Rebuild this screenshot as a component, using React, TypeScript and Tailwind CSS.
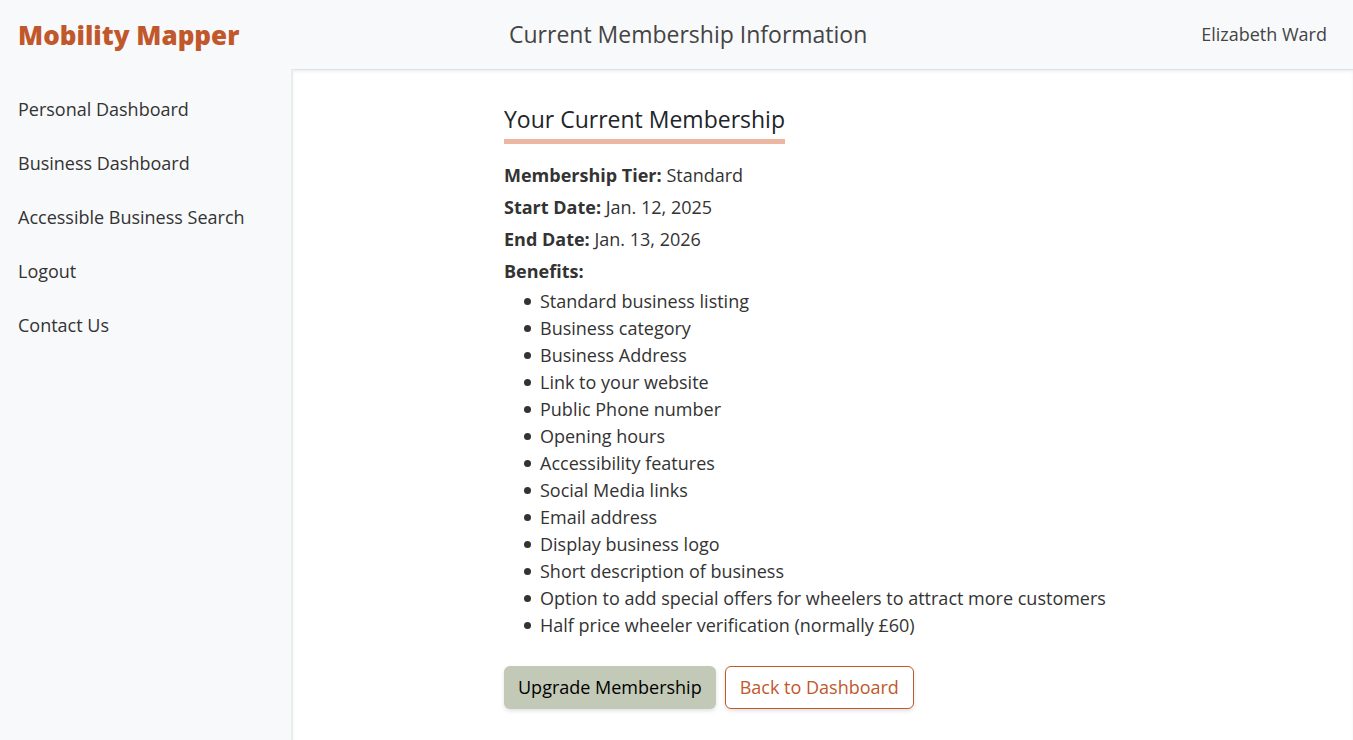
const links = [
  'Personal Dashboard',
  'Business Dashboard',
  'Accessible Business Search',
  'Logout',
  'Contact Us',
];

const details = [
  { label: 'Membership Tier:', value: 'Standard' },
  { label: 'Start Date:', value: 'Jan. 12, 2025' },
  { label: 'End Date:', value: 'Jan. 13, 2026' },
  { label: 'Benefits:', value: '' },
];

const benefits = [
  'Standard business listing',
  'Business category',
  'Business Address',
  'Link to your website',
  'Public Phone number',
  'Opening hours',
  'Accessibility features',
  'Social Media links',
  'Email address',
  'Display business logo',
  'Short description of business',
  'Option to add special offers for wheelers to attract more customers',
  'Half price wheeler verification (normally £60)',
];

function Header() {
  return (
    <header className="flex h-[69px] items-center justify-between bg-[#f8f9fb]">
      <a href="#" className="w-[291px] shrink-0 pl-[18px] text-[26px] leading-10 font-extrabold text-[#c1582c]">
        Mobility Mapper
      </a>
      <h1 className="flex-1 pb-0.5 pl-[218px] text-[23px] leading-8 text-[#444444]">Current Membership Information</h1>
      <span className="pr-[26px] text-[#444444]">Elizabeth Ward</span>
    </header>
  );
}

function Sidebar() {
  return (
    <nav className="w-[293px] shrink-0 border-r-2 border-[#ebecee] bg-[#f8f9fb] pt-[27px] pl-[18px]">
      <ul className="flex flex-col gap-[27px]">
        {links.map((link) => (
          <li key={link}>
            <a href="#">{link}</a>
          </li>
        ))}
      </ul>
    </nav>
  );
}

export default function App() {
  return (
    <div className="flex min-h-screen flex-col bg-white font-['Open_Sans',sans-serif] text-[18px] leading-[27px] text-[#333333]">
      <Header />
      <div className="flex flex-1">
        <Sidebar />
        <main className="flex flex-1 justify-center border-t border-[#dee0e3] shadow-[inset_0_2px_3px_rgba(0,0,0,0.06)]">
          <section className="w-[638px] pt-8 pb-8">
            <h2 className="inline-block border-b-[5px] border-[#ebb7a3] pb-[3px] text-[23px] leading-[34px] text-[#212529]">
              Your Current Membership
            </h2>
            <div className="mt-[18px] flex flex-col gap-[5px]">
              {details.map((d) => (
                <p key={d.label}>
                  <strong className="font-bold">{d.label}</strong> {d.value}
                </p>
              ))}
            </div>
            <ul className="mt-[3px] pl-5">
              {benefits.map((b) => (
                <li
                  key={b}
                  className="flex items-center gap-[9px] before:size-[7px] before:shrink-0 before:rounded-full before:bg-[#333333]"
                >
                  {b}
                </li>
              ))}
            </ul>
            <div className="mt-[27px] flex gap-[9px]">
              <button className="rounded-md bg-[#c2c9b6] px-[14px] py-2 text-black shadow-[0_2px_4px_rgba(0,0,0,0.12)]">
                Upgrade Membership
              </button>
              <button className="rounded-md border border-[#c1582c] bg-white px-[14px] py-[7px] text-[#c1582c] shadow-[0_2px_4px_rgba(0,0,0,0.12)]">
                Back to Dashboard
              </button>
            </div>
          </section>
        </main>
      </div>
    </div>
  );
}
